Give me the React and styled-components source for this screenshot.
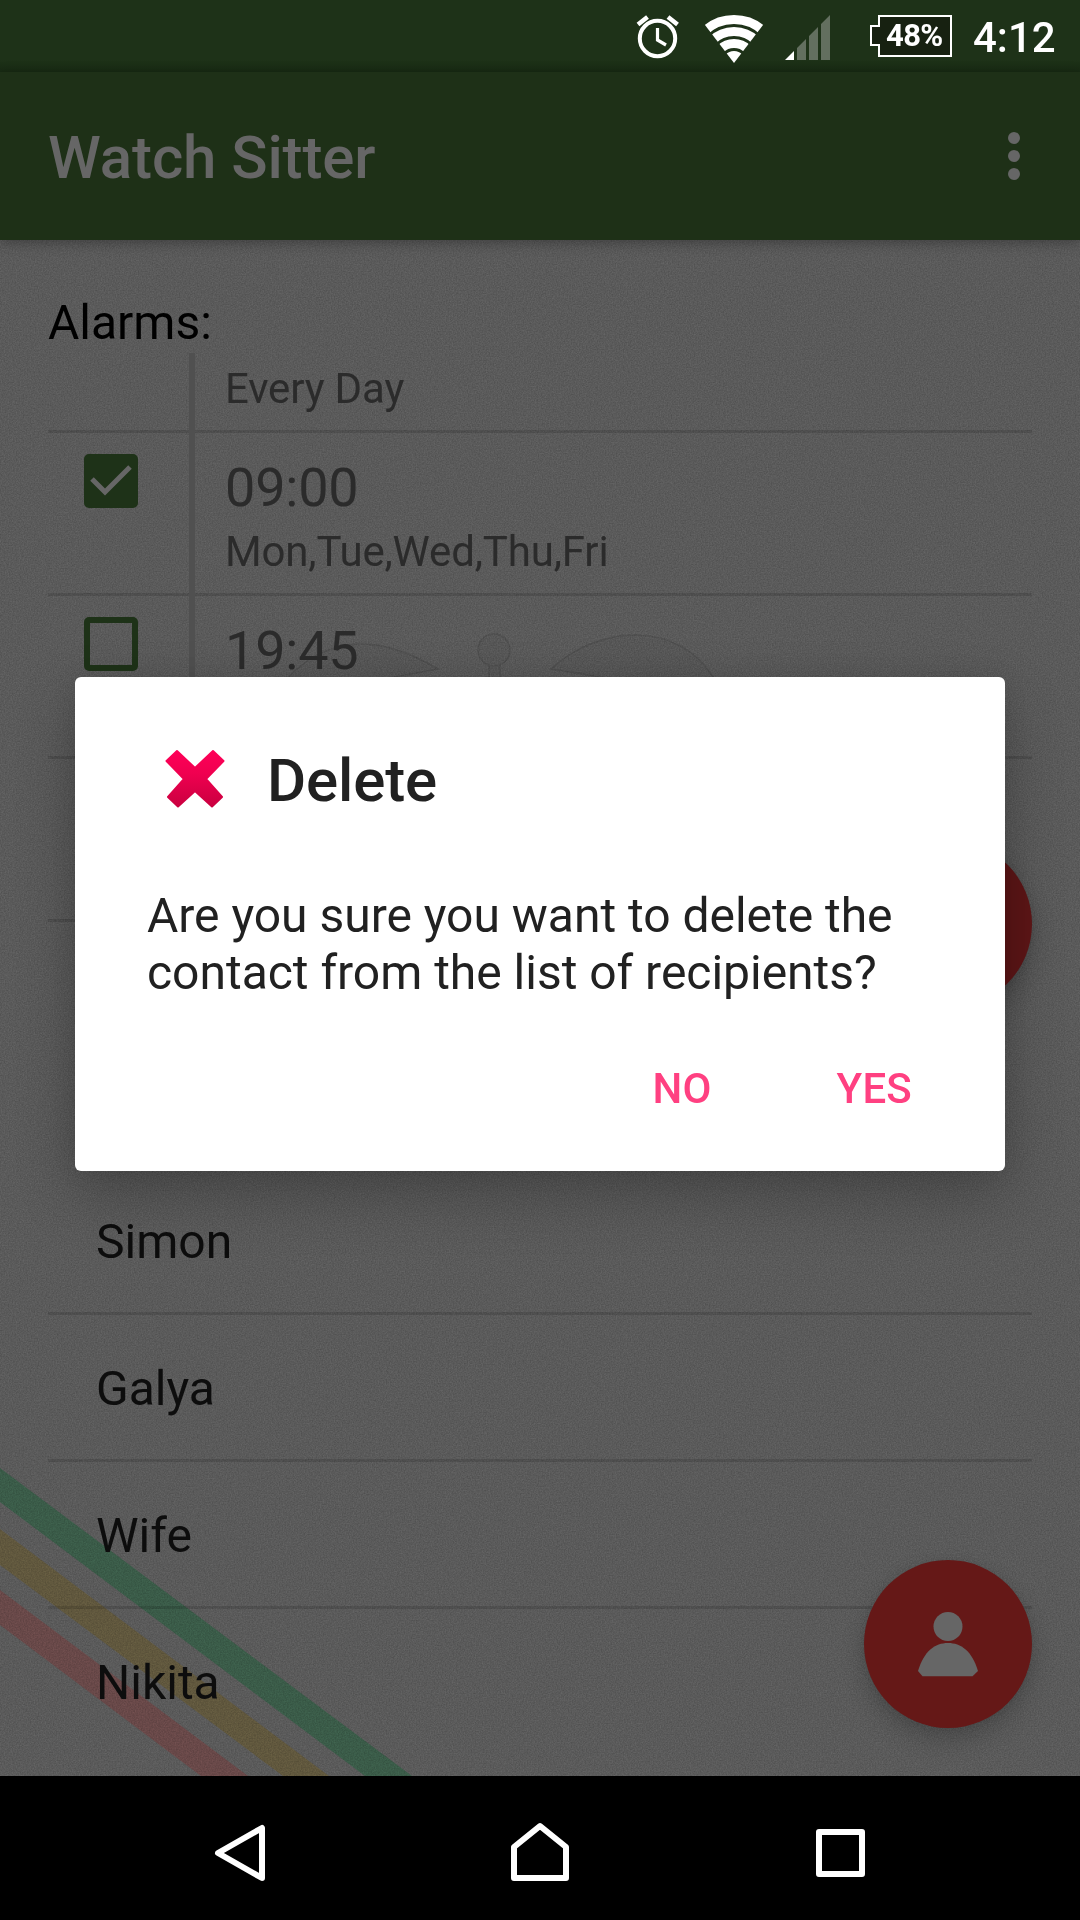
import React from 'react';
import styled, { createGlobalStyle, css } from 'styled-components';

const Global = createGlobalStyle`
  * { box-sizing: border-box; }
  body { margin: 0; background: #000; }
  button { font: inherit; border: 0; background: none; padding: 0; }
`;

const Screen = styled.div`
  position: relative;
  display: flex;
  flex-direction: column;
  width: 1080px;
  height: 1920px;
  overflow: hidden;
  background: #5a5a5a;
  font-family: Roboto, "Liberation Sans", sans-serif;
`;

const Wallpaper = styled.svg`
  position: absolute;
  left: 0;
  top: 240px;
`;

const Grain = styled.rect`
  opacity: 0.17;
  mix-blend-mode: overlay;
`;

const StatusBar = styled.header`
  position: relative;
  display: flex;
  align-items: flex-start;
  height: 72px;
  flex: none;
  padding-left: 636px;
  background: linear-gradient(#1e3218 0 60px, #182a13 72px);
`;

const Battery = styled.div`
  display: flex;
  margin: 15px 0 0 40px;
`;

const BatteryShape = styled.svg`
  display: block;
`;

const BatteryText = styled.span`
  margin-left: -66px;
  width: 60px;
  line-height: 41px;
  font-size: 31px;
  letter-spacing: -0.6px;
  font-weight: 700;
  color: #fff;
`;

const Clock = styled.span`
  margin-left: 27px;
  font-size: 42px;
  line-height: 50px;
  padding-top: 13px;
  font-weight: 500;
  color: #fff;
`;

const StatusIcon = styled.svg`
  display: block;
  flex: none;
  margin-top: 14px;
  margin-left: ${p => p.$gap || 0}px;
`;

const AppBar = styled.div`
  position: relative;
  display: flex;
  align-items: center;
  justify-content: space-between;
  flex: none;
  height: 168px;
  padding: 0 60px 0 48px;
  background: #1e3017;
  box-shadow: 0 3px 12px rgba(0, 0, 0, 0.3);
`;

const AppTitle = styled.h1`
  margin: 4px 0 0;
  font-size: 60px;
  line-height: 72px;
  letter-spacing: -0.1px;
  font-weight: 500;
  color: #666;
`;

const Overflow = styled.div`
  display: flex;
  flex-direction: column;
  gap: 6px;
  i { width: 12px; height: 12px; border-radius: 50%; background: #666; }
`;

const Content = styled.main`
  position: relative;
  flex: 1;
  display: flex;
  flex-direction: column;
  padding: 55px 48px 0;
`;

const Heading = styled.h2`
  margin: 0;
  height: 58px;
  font-size: 48px;
  line-height: 56px;
  font-weight: 400;
  color: #000;
`;

const AlarmRow = styled.div`
  display: grid;
  grid-template-columns: 141px 6px 1fr;
  flex: none;
  height: ${p => p.$height || 163}px;
  border-bottom: 3px solid rgba(0, 0, 0, 0.13);
`;

const Divider = styled.span`
  background: #505050;
  margin-bottom: -3px;
`;

const CheckCell = styled.div`
  padding: 21px 0 0 36px;
`;

const Box = styled.div`
  width: 54px;
  height: 54px;
  border-radius: 5px;
  border: 6px solid #1e3218;
  svg { display: block; margin: -6px; }
  ${p => p.$checked && css`background: #1e3218;`}
`;

const AlarmText = styled.div`
  display: flex;
  flex-direction: column;
  padding-left: 30px;
  color: #2b2b2b;
`;

const Time = styled.span`
  font-size: 54px;
  line-height: 64px;
  letter-spacing: -0.2px;
  margin-top: 23px;
`;

const Days = styled.span`
  font-size: 42px;
  line-height: 50px;
  letter-spacing: -0.16px;
  margin-top: ${p => p.$top}px;
`;

const Contacts = styled.ul`
  list-style: none;
  margin: 246px 0 0;
  padding: 0;
  overflow: hidden;
`;

const Contact = styled.li`
  height: 147px;
  padding: 0 0 0 48px;
  font-size: 48px;
  line-height: 147px;
  color: #0d0d0d;
  border-bottom: 3px solid rgba(0, 0, 0, 0.13);
  &:last-child { border-bottom: 0; }
`;

const Fab = styled.button`
  position: absolute;
  right: 48px;
  top: ${p => p.$top}px;
  display: flex;
  align-items: center;
  justify-content: center;
  width: 168px;
  height: 168px;
  border-radius: 50%;
  background: ${p => p.$color};
  box-shadow: 0 12px 24px rgba(0, 0, 0, 0.2), 0 0 8px rgba(0, 0, 0, 0.06);
`;

const NavBar = styled.nav`
  position: relative;
  display: flex;
  flex: none;
  justify-content: space-between;
  height: 144px;
  padding: 42px 213px 0 213px;
  background: #000;
`;

const Dialog = styled.section`
  position: absolute;
  left: 75px;
  top: 677px;
  width: 930px;
  height: 494px;
  display: flex;
  flex-direction: column;
  padding: 67px 72px 0;
  border-radius: 6px;
  background: #fff;
  color: #212121;
  box-shadow: 0 24px 60px rgba(0, 0, 0, 0.24), 0 0 24px rgba(0, 0, 0, 0.08);
`;

const DialogHead = styled.div`
  display: flex;
  align-items: center;
  height: 72px;
`;

const DialogTitle = styled.h3`
  margin: 2px 0 0 38px;
  font-size: 60px;
  line-height: 72px;
  letter-spacing: -0.15px;
  font-weight: 500;
`;

const Message = styled.p`
  margin: 71px 0 0;
  font-size: 48px;
  line-height: 57px;
  letter-spacing: -0.02px;
  white-space: pre-line;
`;

const Actions = styled.div`
  display: flex;
  justify-content: flex-end;
  gap: 125px;
  margin-top: 63px;
  padding-right: 21px;
`;

const Action = styled.button`
  font-size: 42px;
  line-height: 50px;
  letter-spacing: 0.2px;
  font-weight: 500;
  color: #ff4081;
`;

const alarms = [
  { time: '09:00', days: 'Mon,Tue,Wed,Thu,Fri', on: true },
  { time: '19:45', days: '', on: false },
];

export default function App() {
  return (
    <Screen>
      <Global />
      <Wallpaper width="1080" height="1536" viewBox="0 240 1080 1536">
        <filter id="grain" x="0" y="0" width="100%" height="100%" colorInterpolationFilters="sRGB">
          <feTurbulence type="fractalNoise" baseFrequency="0.73" numOctaves="2" seed="4" />
          <feColorMatrix values="1 0 0 0 0  1 0 0 0 0  1 0 0 0 0  0 0 0 0 1" />
        </filter>
        <g fill="#575757" stroke="#4f4f4f" strokeWidth="1.500">
          <path d="M277 690 Q340 610 438 669 Q400 676 380 680" />
          <path d="M489 658 V690 H500 V658" />
          <circle cx="494" cy="650" r="16" />
          <path d="M551 669 C600 624 680 620 715 680 H620 Z" />
        </g>
        <path d="M0 1468 L412 1776 H365 L0 1502Z" fill="#3a5b48" />
        <path d="M0 1529 L329 1776 H283 L0 1565Z" fill="#60573d" />
        <path d="M0 1590 L248 1776 H201 L0 1625Z" fill="#684848" />
        <Grain y="240" width="1080" height="1536" filter="url(#grain)" />
      </Wallpaper>

      <StatusBar>
        <StatusIcon width="44" height="46" viewBox="636 14 44 46" fill="none" stroke="#fff">
          <circle cx="657.5" cy="38.5" r="17.7" strokeWidth="4" />
          <path d="M657.5 28 V40 L666 45" strokeWidth="3.2" />
          <path d="M638 24.5 L647.5 17 M677.5 24.5 L668 17" strokeWidth="4.5" />
        </StatusIcon>
        <StatusIcon $gap={24} width="60" height="50" viewBox="704 14 60 50">
          <clipPath id="fan"><path d="M734 63 L701.5 20.5 L705 10 H763 L766.5 20.5Z" /></clipPath>
          <g clipPath="url(#fan)" fill="none" stroke="#fff">
            <circle cx="734" cy="63" r="43.5" strokeWidth="9" />
            <circle cx="734" cy="63" r="31.5" strokeWidth="9" />
            <circle cx="734" cy="63" r="19.5" strokeWidth="9" />
            <circle cx="734" cy="63" r="6" strokeWidth="12" />
          </g>
        </StatusIcon>
        <StatusIcon $gap={20} width="46" height="48" viewBox="784 14 46 48">
          <path d="M785 60 L794 51 V60Z" fill="#fff" />
          <path d="M797 48 L806 39 V60 H797Z M809 36 L818 27 V60 H809Z M821 24 L830 15 V60 H821Z" fill="#636f5f" />
        </StatusIcon>
        <Battery>
          <BatteryShape width="82" height="42" viewBox="870 15 82 42">
            <path d="M879 16 H951 V56 H879 V45 H871 V26 H879Z" fill="#172111" stroke="#fff" strokeWidth="2" />
          </BatteryShape>
          <BatteryText>48%</BatteryText>
        </Battery>
        <Clock>4:12</Clock>
      </StatusBar>

      <AppBar>
        <AppTitle>Watch Sitter</AppTitle>
        <Overflow><i /><i /><i /></Overflow>
      </AppBar>

      <Content>
        <Heading>Alarms:</Heading>
        <AlarmRow $height={80}>
          <span />
          <Divider />
          <AlarmText><Days $top={11}>Every Day</Days></AlarmText>
        </AlarmRow>
        {alarms.map(a => (
          <AlarmRow key={a.time}>
            <CheckCell>
              <Box $checked={a.on}>
                {a.on && (
                  <svg width="54" height="54" viewBox="0 0 54 54">
                    <path d="M8 25 L21 38 L46 13" fill="none" stroke="#666" strokeWidth="5" />
                  </svg>
                )}
              </Box>
            </CheckCell>
            <Divider />
            <AlarmText>
              <Time>{a.time}</Time>
              <Days $top={7}>{a.days}</Days>
            </AlarmText>
          </AlarmRow>
        ))}
        <AlarmRow />
        <Contacts>
          <Contact>Simon</Contact>
          <Contact>Galya</Contact>
          <Contact>Wife</Contact>
          <Contact>Nikita</Contact>
        </Contacts>
      </Content>

      <Fab $top={840} $color="#5d1617" />
      <Fab $top={1560} $color="#651817">
        <svg width="62" height="66" viewBox="917 1611 62 66" fill="#666">
          <circle cx="948" cy="1626.500" r="14.500" />
          <path d="M918 1671 C924 1651 935 1643 948 1643 C961 1643 972 1651 978 1671 L972.500 1676.300 H922.500Z" />
        </svg>
      </Fab>

      <NavBar>
        <svg width="54" height="66" viewBox="213 1818 54 66" fill="none" stroke="#fff" strokeWidth="6" strokeLinejoin="round">
          <path d="M262 1828 V1878 L218 1853Z" />
        </svg>
        <svg width="62" height="66" viewBox="509 1818 62 66" fill="none" stroke="#fff" strokeWidth="6" strokeLinejoin="round">
          <path d="M514 1878 V1847 L540 1826 L566 1847 V1878Z" />
        </svg>
        <svg width="54" height="66" viewBox="813 1818 54 66" fill="none" stroke="#fff" strokeWidth="6" strokeLinejoin="round">
          <path d="M819 1832 H862 V1874 H819Z" />
        </svg>
      </NavBar>

      <Dialog>
        <DialogHead>
          <svg width="82" height="82" viewBox="147 739 82 82">
            <linearGradient id="cross" x1="0" y1="750" x2="0" y2="808" gradientUnits="userSpaceOnUse">
              <stop offset="0" stopColor="#ff0058" />
              <stop offset="0.4" stopColor="#f00050" />
              <stop offset="1" stopColor="#c8003f" />
            </linearGradient>
            <path
              d="M177 751 L195 768 L213 751 L223.500 761 L206 779 L222 797 L212 806.500 L195 791 L178 806.500 L168 797 L184 779 L166.500 761Z"
              fill="url(#cross)" stroke="url(#cross)" strokeWidth="2" strokeLinejoin="round"
            />
          </svg>
          <DialogTitle>Delete</DialogTitle>
        </DialogHead>
        <Message>{'Are you sure you want to delete the\ncontact from the list of recipients?'}</Message>
        <Actions>
          <Action>NO</Action>
          <Action>YES</Action>
        </Actions>
      </Dialog>
    </Screen>
  );
}
